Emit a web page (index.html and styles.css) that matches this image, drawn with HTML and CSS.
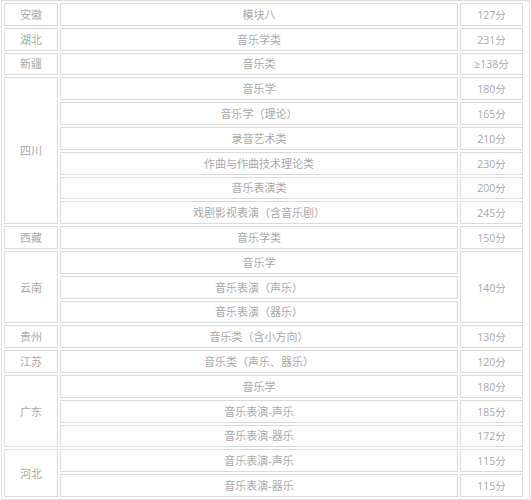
FILE: index.html
```html
<!DOCTYPE html>
<html lang="zh-CN">
<head>
<meta charset="utf-8">
<title>分数线</title>
<link rel="stylesheet" href="styles.css">
</head>
<body>
<table class="score-table">
  <colgroup>
    <col class="col-prov">
    <col class="col-major">
    <col class="col-score">
  </colgroup>
  <tbody>
    <tr><td>安徽</td><td>模块八</td><td class="score">127分</td></tr>
    <tr><td>湖北</td><td>音乐学类</td><td class="score">231分</td></tr>
    <tr><td>新疆</td><td>音乐类</td><td class="score">≥138分</td></tr>
    <tr><td rowspan="6">四川</td><td>音乐学</td><td class="score">180分</td></tr>
    <tr><td>音乐学（理论）</td><td class="score">165分</td></tr>
    <tr><td>录音艺术类</td><td class="score">210分</td></tr>
    <tr><td>作曲与作曲技术理论类</td><td class="score">230分</td></tr>
    <tr><td>音乐表演类</td><td class="score">200分</td></tr>
    <tr><td>戏剧影视表演（含音乐剧）</td><td class="score">245分</td></tr>
    <tr><td>西藏</td><td>音乐学类</td><td class="score">150分</td></tr>
    <tr><td rowspan="3">云南</td><td>音乐学</td><td class="score" rowspan="3">140分</td></tr>
    <tr><td>音乐表演（声乐）</td></tr>
    <tr><td>音乐表演（器乐）</td></tr>
    <tr><td>贵州</td><td>音乐类（含小方向）</td><td class="score">130分</td></tr>
    <tr><td>江苏</td><td>音乐类（声乐、器乐）</td><td class="score">120分</td></tr>
    <tr><td rowspan="3">广东</td><td>音乐学</td><td class="score">180分</td></tr>
    <tr><td>音乐表演-声乐</td><td class="score">185分</td></tr>
    <tr><td>音乐表演-器乐</td><td class="score">172分</td></tr>
    <tr><td rowspan="2">河北</td><td>音乐表演-声乐</td><td class="score">115分</td></tr>
    <tr><td>音乐表演-器乐</td><td class="score">115分</td></tr>
  </tbody>
</table>
</body>
</html>
```
FILE: styles.css
```css
html, body {
  margin: 0;
  padding: 0;
  background: #ffffff;
}

body {
  font-family: "Open Sans", "Noto Sans CJK SC", sans-serif;
  font-size: 11px;
  color: #a8a8a8;
}

.score-table {
  margin: 0 0 0 1px;
  width: 529px;
  table-layout: fixed;
  border-collapse: separate;
  border-spacing: 2px;
  border: 1px solid #dedede;
  padding: 0 4px 0 0;
}

.col-prov { width: 54px; }
.col-major { width: 398px; }
.col-score { width: 63px; }

.score-table tr {
  height: 22.8px;
}

.score-table td {
  box-sizing: border-box;
  border: 1px solid #dadada;
  padding: 1px 0 0;
  line-height: 14px;
  text-align: center;
  vertical-align: middle;
  white-space: nowrap;
}

.score-table td.score {
  font-size: 10.5px;
}
```
